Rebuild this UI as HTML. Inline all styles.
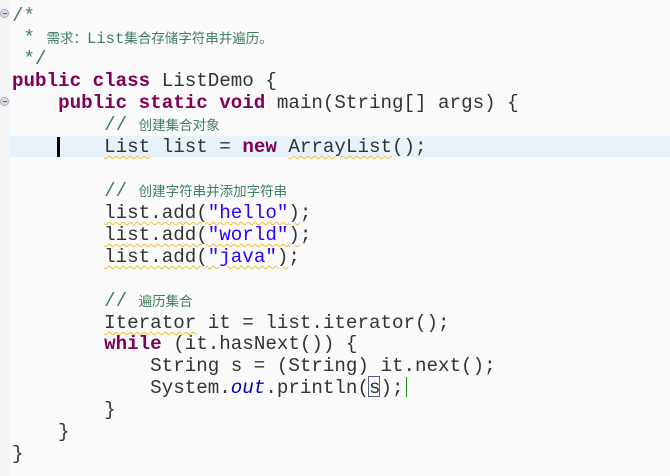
<!DOCTYPE html>
<html><head><meta charset="utf-8"><style>
body{margin:0;width:670px;height:476px;background:#fafafa;overflow:hidden;position:relative;font-family:"Liberation Mono",monospace;font-size:19.2px;color:#333}
.g{position:absolute;left:0;top:0;width:10px;height:476px;background:#f4f4f4}
.l{position:absolute;left:12px;height:22px;line-height:22px;white-space:pre}
.hl{position:absolute;left:10px;right:0;top:136px;height:21px;background:#e8f2fb}
.c{color:#3f7f5f}.cj{font-family:"Liberation Sans","Noto Sans CJK SC",sans-serif;font-size:13.5px;color:#3f7f5f}
.k{color:#7f0055;font-weight:bold}.s{color:#2a00ff}.o{color:#0000c0;font-style:italic}
.w{text-decoration:underline wavy #e8c040 1px;text-underline-offset:3px}
.f{position:absolute;left:0;width:9px;height:9px;border-radius:50%;background:#d8dce4;border:1px solid #a8b0c0;box-sizing:border-box}
.f::after{content:"";position:absolute;left:2px;top:3px;width:4px;height:1px;background:#506080}
</style></head><body>
<div class="g"></div>
<div class="hl"></div>
<div class="f" style="top:9px"></div>
<div class="f" style="top:97px"></div>
<div style="position:absolute;left:57px;top:137px;width:3px;height:20px;background:#000"></div>
<div style="position:absolute;left:406px;top:377px;width:1px;height:20px;background:#1a8f1a"></div>
<div style="position:absolute;left:368px;top:376px;width:12px;height:21px;border:1px solid #506080;box-sizing:border-box"></div>
<div class="l" style="top:5px"><span class="c">/*</span></div>
<div class="l" style="top:27px"><span class="c"> * </span><span class="cj">需求：</span><span class="c" style="font-size:15.5px">List</span><span class="cj">集合存储字符串并遍历。</span></div>
<div class="l" style="top:48px"><span class="c"> */</span></div>
<div class="l" style="top:70px"><span class="k">public class</span> ListDemo {</div>
<div class="l" style="top:92px">    <span class="k">public static void</span> main(String[] args) {</div>
<div class="l" style="top:114px">        <span class="c">// </span><span class="cj">创建集合对象</span></div>
<div class="l" style="top:136px">        <span class="w">List</span> list = <span class="k">new</span> <span class="w">ArrayList</span>();</div>
<div class="l" style="top:180px">        <span class="c">// </span><span class="cj">创建字符串并添加字符串</span></div>
<div class="l" style="top:202px">        <span class="w">list.add(<span class="s">"hello"</span>)</span>;</div>
<div class="l" style="top:224px">        <span class="w">list.add(<span class="s">"world"</span>)</span>;</div>
<div class="l" style="top:246px">        <span class="w">list.add(<span class="s">"java"</span>)</span>;</div>
<div class="l" style="top:290px">        <span class="c">// </span><span class="cj">遍历集合</span></div>
<div class="l" style="top:312px">        <span class="w">Iterator</span> it = list.iterator();</div>
<div class="l" style="top:333px">        <span class="k">while</span> (it.hasNext()) {</div>
<div class="l" style="top:355px">            String s = (String) it.next();</div>
<div class="l" style="top:377px">            System.<span class="o">out</span>.println(s);</div>
<div class="l" style="top:399px">        }</div>
<div class="l" style="top:421px">    }</div>
<div class="l" style="top:443px">}</div>
</body></html>
